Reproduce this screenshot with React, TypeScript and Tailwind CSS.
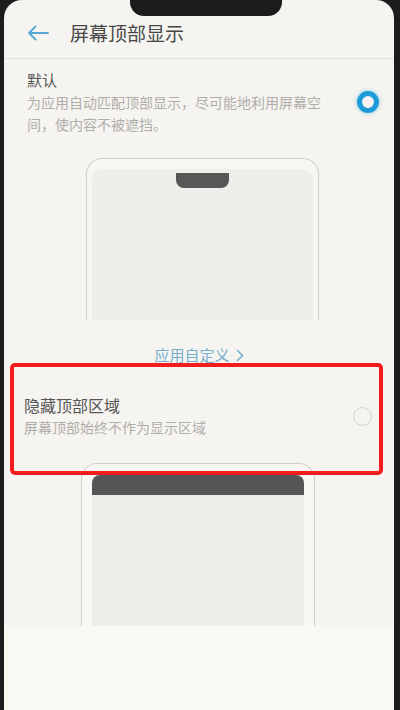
import React from 'react';

const cjk = { fontFamily: '"Noto Sans CJK SC", "Noto Sans", sans-serif' };

function Radio({ checked }: { checked: boolean }) {
    if (checked) {
        return (
            <div className="w-[22px] h-[22px] rounded-full border-[5px] border-[#1c9bd8] shadow-[0_0_4px_rgba(40,170,230,0.6)]" />
        );
    }
    return <div className="w-[19px] h-[19px] rounded-full border-[1.5px] border-[#d4d2ce]" />;
}

export default function App() {
    return (
        <div className="relative w-[400px] h-[710px] overflow-hidden bg-[#1c1c1c] flex" style={cjk}>
            <div className="w-[4px] shrink-0" />
            <div className="flex-1 flex flex-col bg-[#f6f4f0] rounded-t-[18px]">
                {/* notch */}
                <div className="h-[16px] flex">
                    <div className="ml-[126px] w-[152px] h-[16px] bg-[#1c1c1c] rounded-b-[14px]" />
                </div>

                {/* header */}
                <div className="h-[34px] flex items-center">
                    <svg className="ml-[23px]" width="22" height="16" viewBox="0 0 22 16" fill="none">
                        <path d="M21 8H2M8.5 1.5L2 8l6.5 6.5" stroke="#55a7d2" strokeWidth="1.8" strokeLinecap="round" strokeLinejoin="round" />
                    </svg>
                    <span className="ml-[21px] text-[19px] leading-[24px] text-[#474747]">屏幕顶部显示</span>
                </div>
                <div className="mt-[8px] h-px bg-[#e3e1dc]" />

                {/* default option */}
                <div className="mt-[10px] flex items-center pl-[23px] pr-[15px]">
                    <div className="flex-1">
                        <div className="text-[15px] leading-[22px] text-[#555]">默认</div>
                        <div className="text-[14px] leading-[22px] text-[#b0aeaa]">
                            为应用自动匹配顶部显示，尽可能地利用屏幕空
                            <br />
                            间，使内容不被遮挡。
                        </div>
                    </div>
                    <Radio checked />
                </div>

                {/* preview with notch */}
                <div className="mt-[23px] ml-[82px] w-[233px] h-[162px] border-[1.5px] border-b-0 border-[#d0cecb] rounded-t-[16px] bg-[#f7f6f2] px-[5px] pt-[10px]">
                    <div className="h-full bg-[#efeeea] rounded-t-[10px] flex justify-center">
                        <div className="mt-[4px] w-[53px] h-[15px] bg-[#575757] rounded-b-[8px]" />
                    </div>
                </div>

                <div className="mt-[24px] flex justify-center items-center gap-[6px] text-[15px] leading-[22px] text-[#74aecb]">
                    <span>应用自定义</span>
                    <svg width="8" height="13" viewBox="0 0 8 13" fill="none">
                        <path d="M1.5 1.5l5 5-5 5" stroke="#74aecb" strokeWidth="1.5" strokeLinecap="round" strokeLinejoin="round" />
                    </svg>
                </div>

                {/* hide top option */}
                <div className="mt-[28px] flex items-center pl-[20px] pr-[22px]">
                    <div className="flex-1">
                        <div className="text-[16px] leading-[22px] text-[#555]">隐藏顶部区域</div>
                        <div className="text-[14px] leading-[22px] text-[#b0aeaa]">屏幕顶部始终不作为显示区域</div>
                    </div>
                    <Radio checked={false} />
                </div>

                {/* preview with hidden top */}
                <div className="mt-[25px] ml-[77px] w-[234px] h-[163px] border-[1.5px] border-b-0 border-[#d0cecb] rounded-t-[16px] bg-[#f8f7f3] px-[10px] pt-[11px]">
                    <div className="h-full flex flex-col">
                        <div className="h-[20px] bg-[#555555] rounded-t-[8px]" />
                        <div className="flex-1 bg-[#efeeea]" />
                    </div>
                </div>

                <div className="flex-1 bg-[#faf8f3]" />
            </div>
            <div className="w-[6px] shrink-0" />

            {/* annotation box */}
            <div className="absolute left-[10px] top-[363px] w-[373px] h-[112px] border-4 border-[#f41d1d] rounded-[5px]" />
        </div>
    );
}
